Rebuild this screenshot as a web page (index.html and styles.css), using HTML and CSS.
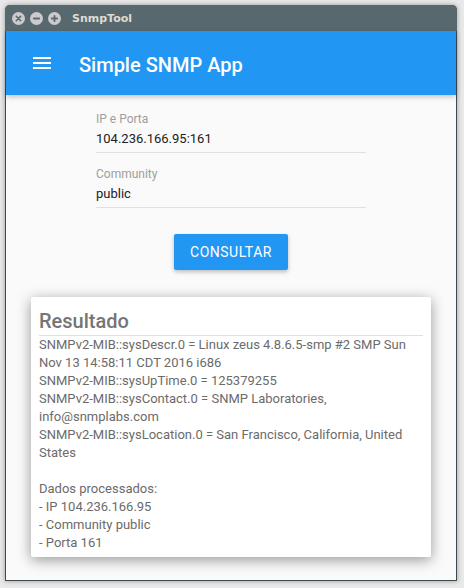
FILE: index.html
```html
<!DOCTYPE html>
<html lang="pt">
<head>
<meta charset="utf-8">
<title>SnmpTool</title>
<link rel="stylesheet" href="styles.css">
</head>
<body>
<div class="window">
  <div class="titlebar">
    <div class="wbtns">
      <svg class="wbtn" viewBox="0 0 13 13" width="13" height="13"><circle cx="6.5" cy="6.5" r="6.5" fill="#cbcbcb"/><path d="M4.3 4.3 L8.7 8.7 M8.7 4.3 L4.3 8.7" stroke="#5a6a70" stroke-width="1.6" stroke-linecap="round"/></svg>
      <svg class="wbtn" viewBox="0 0 13 13" width="13" height="13"><circle cx="6.5" cy="6.5" r="6.5" fill="#cbcbcb"/><path d="M3.8 6.5 L9.2 6.5" stroke="#5a6a70" stroke-width="1.8" stroke-linecap="round"/></svg>
      <svg class="wbtn" viewBox="0 0 13 13" width="13" height="13"><circle cx="6.5" cy="6.5" r="6.5" fill="#cbcbcb"/><path d="M3.8 6.5 L9.2 6.5 M6.5 3.8 L6.5 9.2" stroke="#5a6a70" stroke-width="1.8" stroke-linecap="round"/></svg>
    </div>
    <span class="wtitle">SnmpTool</span>
  </div>
  <header class="appbar">
    <svg class="menu" viewBox="0 0 18 12" width="18" height="12"><rect x="0" y="0" width="18" height="2" fill="#fff"/><rect x="0" y="5" width="18" height="2" fill="#fff"/><rect x="0" y="10" width="18" height="2" fill="#fff"/></svg>
    <h1 class="apptitle">Simple SNMP App</h1>
  </header>
  <main class="content">
    <div class="form">
      <div class="field">
        <span class="label">IP e Porta</span>
        <span class="value">104.236.166.95:161</span>
      </div>
      <div class="field field2">
        <span class="label">Community</span>
        <span class="value">public</span>
      </div>
    </div>
    <button class="btn">CONSULTAR</button>
    <section class="card">
      <h2 class="card-title">Resultado</h2>
      <div class="result">
        <div>SNMPv2-MIB::sysDescr.0 = Linux zeus 4.8.6.5-smp #2 SMP Sun Nov 13 14:58:11 CDT 2016 i686</div>
        <div>SNMPv2-MIB::sysUpTime.0 = 125379255</div>
        <div>SNMPv2-MIB::sysContact.0 = SNMP Laboratories, info@snmplabs.com</div>
        <div>SNMPv2-MIB::sysLocation.0 = San Francisco, California, United States</div>
        <div class="blank">&nbsp;</div>
        <div>Dados processados:</div>
        <div>- IP 104.236.166.95</div>
        <div>- Community public</div>
        <div>- Porta 161</div>
      </div>
    </section>
  </main>
</div>
</body>
</html>
```
FILE: styles.css
```css
html, body {
  margin: 0;
  padding: 0;
}
body {
  background: #e9e9e9;
  font-family: Roboto, "Noto Sans", sans-serif;
  width: 464px;
  height: 588px;
  overflow: hidden;
}
.window {
  margin: 5px 0 0 5px;
  width: 452px;
  height: 576px;
  box-sizing: border-box;
  display: flex;
  flex-direction: column;
  border-radius: 5px 5px 0 0;
  box-shadow: 0 0 5px rgba(0, 0, 0, 0.35);
  background: #3d4b50;
  padding: 0 1px 1px 1px;
}
.titlebar {
  height: 26px;
  flex: none;
  display: flex;
  align-items: center;
  background: #57696f;
  margin: 0 -1px;
  padding-left: 7px;
  border-radius: 5px 5px 0 0;
}
.wbtns {
  display: flex;
  gap: 5px;
  padding-top: 1px;
}
.wbtn {
  display: block;
}
.wtitle {
  margin-left: 11px;
  font-family: "DejaVu Sans", sans-serif;
  font-weight: bold;
  font-size: 11px;
  color: #dfdbd2;
  padding-top: 1px;
}
.appbar {
  position: relative;
  z-index: 1;
  height: 64px;
  flex: none;
  display: flex;
  align-items: center;
  background: #2196f3;
  padding-left: 27px;
  box-shadow: 0 2px 5px rgba(0, 0, 0, 0.22);
}
.menu {
  display: block;
}
.apptitle {
  margin: 0 0 0 28px;
  padding-top: 4px;
  font-size: 20px;
  font-weight: 500;
  color: #fff;
  line-height: normal;
}
.content {
  flex: 1;
  background: #fafafa;
  display: flex;
  flex-direction: column;
  align-items: center;
  padding-top: 17px;
}
.form {
  width: 270px;
  display: flex;
  flex-direction: column;
}
.field {
  display: flex;
  flex-direction: column;
}
.field2 {
  margin-top: 14px;
}
.label {
  font-size: 12px;
  line-height: 14px;
  color: #9e9e9e;
}
.value {
  margin-top: 5px;
  font-size: 13px;
  line-height: 15px;
  color: #212121;
  padding-bottom: 6px;
  border-bottom: 1px solid #e0e0e0;
}
.btn {
  margin-top: 26px;
  height: 36px;
  padding: 0 16px;
  border: none;
  border-radius: 2px;
  background: #2196f3;
  color: #fff;
  font-family: Roboto, sans-serif;
  font-size: 14px;
  font-weight: 400;
  letter-spacing: 0.5px;
  line-height: 36px;
  box-shadow: 0 2px 4px rgba(0, 0, 0, 0.25);
}
.card {
  margin-top: 27px;
  width: 400px;
  height: 260px;
  box-sizing: border-box;
  background: #fff;
  padding: 12px 8px 5px;
  border-radius: 2px;
  box-shadow: 0 3px 14px rgba(0, 0, 0, 0.4);
}
.card-title {
  margin: 0;
  font-size: 20px;
  font-weight: 500;
  line-height: 24px;
  color: #757575;
  padding-bottom: 2px;
  border-bottom: 1px solid #e0e0e0;
}
.result {
  font-size: 13px;
  line-height: 18px;
  color: #6b6b6b;
}
```
